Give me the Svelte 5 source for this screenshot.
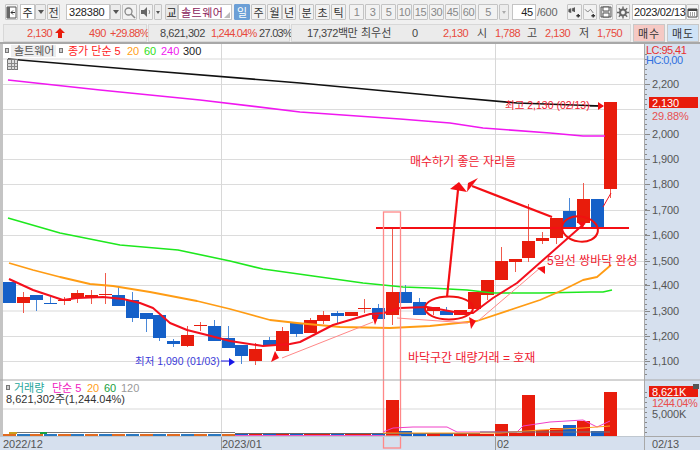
<script lang="ts">
  const RED = '#e81c0c';
  const BLUE = '#1560c8';

  const periods = ['1', '3', '5', '10', '15', '30', '45', '60'];

  // top, bottom, wick top, wick bottom, colour (r|b)
  const candles: [number, number, number, number, string][] = [
    [282, 303, 282, 303, 'b'], [297, 303, 292, 313, 'r'], [295, 300, 295, 311, 'b'], [303, 304, 297, 304, 'b'],
    [300, 301, 297, 305, 'r'], [293, 298, 290, 303, 'r'], [295, 298, 290, 304, 'r'], [294, 295, 273, 304, 'r'],
    [295, 306, 287, 306, 'b'], [300, 318, 292, 322, 'b'], [313, 319, 313, 332, 'b'], [315, 338, 315, 341, 'b'],
    [341, 344, 339, 347, 'b'], [335, 346, 326, 347, 'r'], [325, 326, 322, 331, 'r'], [326, 341, 320, 341, 'b'],
    [338, 348, 326, 348, 'b'], [345, 356, 345, 364, 'b'], [349, 361, 343, 365, 'r'], [340, 346, 337, 346, 'b'],
    [331, 351, 327, 351, 'r'], [323, 334, 323, 337, 'b'], [320, 333, 318, 333, 'r'], [315, 321, 311, 324, 'r'],
    [313, 316, 311, 323, 'b'], [312, 316, 312, 316, 'r'], [308, 309, 299, 313, 'r'], [308, 319, 304, 319, 'b'],
    [292, 315, 228, 325, 'r'], [292, 303, 285, 303, 'b'], [302, 315, 298, 315, 'b'], [307, 311, 307, 315, 'r'],
    [311, 315, 307, 315, 'b'], [310, 315, 310, 315, 'r'], [292, 309, 292, 309, 'r'], [280, 295, 280, 300, 'r'],
    [261, 280, 247, 280, 'r'], [259, 262, 259, 272, 'r'], [241, 258, 204, 262, 'r'], [238, 241, 232, 244, 'r'],
    [218, 238, 218, 244, 'r'], [211, 227, 198, 227, 'b'], [199, 223, 183, 223, 'r'], [199, 227, 199, 227, 'b'],
    [102, 189, 102, 198, 'r'],
  ];
  const cx = (i: number) => Math.round(3 + 13.67 * i);

  // volume tops by candle index, everything else sits near the baseline
  const volTops: Record<number, number> = {
    28: 400, 29: 431, 30: 433, 31: 433, 36: 424, 37: 433, 38: 395, 39: 430, 40: 428, 41: 425, 42: 421, 43: 431, 44: 392,
  };
  const volColor = ['#e06a20', '#2a78c0'];

  const priceGrid = [59, 84, 109, 134, 159, 184, 210, 235, 261, 285, 311, 336, 361];
  const axisLabels = [
    ['2,200', 84], ['2,000', 134], ['1,900', 159], ['1,800', 184], ['1,700', 210], ['1,600', 235],
    ['1,500', 261], ['1,400', 285], ['1,300', 311], ['1,200', 336], ['1,100', 361],
  ];
  const minorTicks = Array.from({ length: 66 }, (_, i) => 54 + i * 5).filter((y) => y < 378);
  const volTicks = [392, 397, 402, 407, 412, 417, 422, 427, 432];

  const ma300 = '8,59 140,70 300,83 450,97 517,103 602,106';
  const ma240 = '8,80 100,90 200,100 300,112 400,119 450,123 483,128 550,133 583,136 605,136';
  const ma60 = '8,218 60,233 120,245 178,250 230,261 263,269 313,276 363,283 403,287 430,288 467,290 493,293 540,293 590,292 603,292 612,290';
  const ma20 = '9,263 33,270 60,277 90,284 113,286 150,292 197,301 230,309 270,320 297,323 340,327 390,328 430,326 477,321 540,300 563,290 583,280 597,277 611,265';
  const ma5 = '9,279 33,290 63,300 77,298 103,297 123,299 140,303 153,308 170,323 187,330 207,335 230,341 263,346 290,344 300,342 333,325 370,314 384,313 400,308 427,307 460,313 473,313 493,298 517,283 585,223';
  const volMa5 = '383,432 393,428 413,427 447,427 457,432 517,432 523,426 550,422 583,420 597,427 610,421';
  const volMa20 = '383,433 500,433 540,430 583,428 610,426';
</script>

<div class="app">
  <div class="toolbar">
    <button class="btn w13">
      <svg width="11" height="13" viewBox="0 0 11 13"><path d="M1 1h9v11H1z" fill="#fff" stroke="#555" /><path d="M1 1h3v11H1z" fill="#666" /><path d="M9 6.500H5M7 4.500 5 6.500l2 2" fill="none" stroke="#333" /></svg>
    </button>
    <span class="input w15 ml2 center">주</span>
    <button class="btn w11 drop"><i class="tri"></i></button>
    <button class="btn w13 ml1">전</button>
    <span class="input w44 ml6">328380</span>
    <button class="btn w11 drop"><i class="tri"></i></button>
    <button class="btn w15 ml1">
      <svg width="13" height="13" viewBox="0 0 13 13"><circle cx="5.500" cy="5.500" r="3.500" fill="none" stroke="#888" stroke-width="1.300" /><path d="M8 8l4 4" stroke="#888" stroke-width="1.600" /></svg>
    </button>
    <button class="btn w14 ml2">
      <svg width="12" height="12" viewBox="0 0 12 12"><path d="M1 4h3l3-3v10L4 8H1z" fill="#666" /><path d="M9 4q1.500 2 0 4" fill="none" stroke="#888" /></svg>
    </button>
    <button class="btn w8 drop ml1"><i class="tri small"></i></button>
    <button class="btn w13 ml3 dark">교</button>
    <span class="input name">솔트웨어<i class="corner"></i></span>
    <button class="btn w16 active ml2">일</button>
    <button class="btn w15 ml1">주</button>
    <button class="btn w15 ml1">월</button>
    <button class="btn w14">년</button>
    <button class="btn w15 ml3">분</button>
    <button class="btn w15 ml1">초</button>
    <button class="btn w15 ml1">틱</button>
    <div class="periods">
      {#each periods as p}
        <button class="btn w15 muted">{p}</button>
      {/each}
    </div>
    <button class="btn w20 muted ml2">5</button>
    <button class="btn w10 drop ml1"><i class="tri small light"></i></button>
    <span class="input w24 ml3 right">45</span>
    <span class="count">/600</span>
    <button class="btn w15 ml9">
      <svg width="14" height="13" viewBox="0 0 14 13"><path d="M3 2v5M3 3h-2v3h2M7 1v5M7 2H5v3h2" fill="#555" stroke="#555" /><path d="M11 8v4M9 10h4" stroke="#333" stroke-width="1.500" /></svg>
    </button>
    <button class="btn w14 ml1">
      <svg width="13" height="13" viewBox="0 0 13 13"><path d="M1 3l3 3 3-3 3 4" fill="none" stroke="#777" /><path d="M10 8v4M8 10h4" stroke="#333" stroke-width="1.500" /></svg>
    </button>
    <button class="btn w14 ml2">
      <svg width="12" height="12" viewBox="0 0 12 12"><path d="M1 1h10v10H1z" fill="#ddd" stroke="#555" /><path d="M3 1h6v4H3zM3 7h6v4H3z" fill="#fff" stroke="#555" /></svg>
    </button>
    <button class="btn w14 ml3">
      <svg width="13" height="13" viewBox="0 0 13 13"><circle cx="6.500" cy="6.500" r="3.200" fill="none" stroke="#666" stroke-width="2.200" /><path d="M6.500 0v3M6.500 10v3M0 6.500h3M10 6.500h3M2 2l2 2M9 9l2 2M11 2L9 4M4 9l-2 2" stroke="#666" stroke-width="1.500" /></svg>
    </button>
    <span class="input date ml2">2023/02/13</span>
    <button class="btn w13">
      <svg width="11" height="11" viewBox="0 0 11 11"><path d="M1 2h9v8H1z" fill="#fff" stroke="#444" /><path d="M1 2h9v2H1z" fill="#444" /><path d="M3 6h1M5 6h1M7 6h1M3 8h1M5 8h1M7 8h1" stroke="#444" /></svg>
    </button>
  </div>

  <div class="quote">
    <div class="seg s1">
      <span class="red p2130">2,130</span>
      <svg class="up" width="10" height="10" viewBox="0 0 10 10"><path d="M5 0l5 5H7v5H3V5H0z" fill="#e81c0c" /></svg>
      <span class="red p490">490</span>
      <span class="red p2988">+29.88%</span>
    </div>
    <div class="seg s2">
      <span class="pvol">8,621,302</span>
      <span class="red prate">1,244.04%</span>
      <span class="pturn">27.03%</span>
    </div>
    <div class="seg s3">
      <span class="pamt">17,372백만</span>
      <span class="pbest">최우선</span>
      <span class="pzero">0</span>
      <span class="red pbid">2,130</span>
      <span class="k1">시</span>
      <span class="red v1">1,788</span>
      <span class="k2">고</span>
      <span class="red v2">2,130</span>
      <span class="k3">저</span>
      <span class="red v3">1,750</span>
    </div>
    <button class="order buy">매수</button>
    <button class="order sell">매도</button>
  </div>

  <svg class="chart" width="700" height="406" viewBox="0 44 700 406">
    <rect x="0" y="44" width="700" height="406" fill="#fff" />

    <!-- grid -->
    <g shape-rendering="crispEdges">
      {#each priceGrid as y}
        <line x1="3" x2="644" y1={y} y2={y} stroke={y === 59 || y === 311 ? '#ececec' : '#dcdcdc'} stroke-width={y === 59 || y === 311 ? 2 : 1} />
      {/each}
      <line x1="3" x2="644" y1="409" y2="409" stroke="#ececec" stroke-width="2" />
      <line x1="221.500" x2="221.500" y1="44" y2="436" stroke="#d8d8d8" />
      <line x1="495.500" x2="495.500" y1="44" y2="436" stroke="#d8d8d8" />
      <rect x="0" y="44" width="2.500" height="406" fill="#c4c4c4" />
    </g>

    <!-- candles -->
    <g shape-rendering="crispEdges">
      {#each candles as [top, bottom, wt, wb, c], i}
        <line x1={cx(i) + 6.5} x2={cx(i) + 6.5} y1={wt} y2={wb} stroke={c === 'r' ? '#f05a4c' : '#4a88d8'} />
        <rect x={cx(i)} y={top} width="12.500" height={bottom - top} fill={c === 'r' ? RED : BLUE} />
      {/each}
    </g>

    <!-- moving averages -->
    <g fill="none" stroke-linejoin="round">
      <polyline points={ma300} stroke="#111" stroke-width="1.700" />
      <polyline points={ma240} stroke="#f018f0" stroke-width="1.700" />
      <polyline points={ma60} stroke="#1ee81e" stroke-width="1.600" />
      <polyline points={ma20} stroke="#ff9c14" stroke-width="1.800" />
      <polyline points={ma5} stroke="#f40f1c" stroke-width="2" />
      <polyline points="603,207 611,193" stroke="#f40f1c" />
    </g>

    <!-- annotations -->
    <g>
      <line x1="376" x2="629" y1="228" y2="228" stroke="#f40f14" stroke-width="2.200" />
      <rect x="383.500" y="212" width="17" height="236" fill="none" stroke="#f88" stroke-width="1.300" />
      <ellipse cx="449" cy="308" rx="24" ry="11.500" fill="none" stroke="#f01010" stroke-width="2" />
      <ellipse cx="580" cy="229" rx="18" ry="12.500" fill="none" stroke="#f01010" stroke-width="2" transform="rotate(8 580 229)" />
      <line x1="447" y1="297" x2="458" y2="190" stroke="#f40f14" stroke-width="2.200" />
      <polygon points="459,182 450,189 467,192" fill="#f40f14" />
      <line x1="552" y1="217" x2="472" y2="186" stroke="#f40f14" stroke-width="2.200" />
      <polygon points="468,183 467,192 478,178" fill="#f40f14" />
      <polygon points="585,222 577,222 583,228" fill="#f40f14" />
      <line x1="282" y1="358" x2="373" y2="322" stroke="#f88" />
      <polygon points="271,362 279,358 275,351" fill="#f40f14" />
      <polygon points="372,315 379,315 375,325" fill="#f40f14" />
      <line x1="397" y1="318" x2="468" y2="323" stroke="#f88" />
      <polygon points="469,317 476,321 471,329" fill="#f40f14" />
      <line x1="478" y1="321" x2="540" y2="268" stroke="#f88" />
      <polygon points="537,268 545,266 545,274" fill="#f40f14" />
      <line x1="590" y1="106" x2="603" y2="106" stroke="#111" />
      <polygon points="604,106 598,102 598,110" fill="#f40f14" />
      <line x1="221" y1="361" x2="229" y2="361" stroke="#1818e8" />
      <polygon points="235,362 229,358 229,366" fill="#1818e8" />
    </g>

    <text class="ann big" x="410" y="166">매수하기 좋은 자리들</text>
    <text class="ann big" x="547" y="265">5일선 쌍바닥 완성</text>
    <text class="ann big" x="408" y="362">바닥구간 대량거래 = 호재</text>
    <text class="ann" x="505" y="109">최고 2,130 (02/13)</text>
    <text class="ann low" x="135" y="365">최저 1,090 (01/03)</text>

    <!-- price legend -->
    <rect x="5.500" y="48.500" width="3" height="4" fill="#ccc" stroke="#777" />
    <rect x="11" y="45" width="45" height="12" fill="#eee" />
    <text class="lg" x="14" y="55" fill="#555">솔트웨어</text>
    <rect x="59.500" y="48.500" width="3" height="4" fill="#ccc" stroke="#777" />
    <text class="lg" x="68" y="55" fill="#f22">종가 단순 5</text>
    <text class="lg" x="127" y="55" fill="#ffa020">20</text>
    <text class="lg" x="144" y="55" fill="#30e020">60</text>
    <text class="lg" x="161" y="55" fill="#f020f0">240</text>
    <text class="lg" x="183" y="55" fill="#222">300</text>
    <g shape-rendering="crispEdges">
      <rect x="7.500" y="59.500" width="10" height="10" fill="#ddd" stroke="#777" />
      <path d="M7 63h10M7 66h10M11 60v10M14 60v10" stroke="#888" />
    </g>

    <!-- volume pane -->
    <line x1="0" x2="700" y1="380" y2="380" stroke="#a8a8a8" />
    <rect x="6.500" y="385.500" width="3" height="4" fill="#ccc" stroke="#777" />
    <text class="lg" x="14" y="392" fill="#26a69a">거래량</text>
    <text class="lg" x="52" y="392" fill="#f020c0">단순 5</text>
    <text class="lg" x="87" y="392" fill="#ffa020">20</text>
    <text class="lg" x="104" y="392" fill="#18a040">60</text>
    <text class="lg" x="121" y="392" fill="#999">120</text>
    <text class="lg" x="6" y="403" fill="#333">8,621,302주(1,244.04%)</text>

    <g shape-rendering="crispEdges">
      {#each candles as [, , , , c], i}
        {#if volTops[i]}
          <rect x={cx(i)} y={volTops[i]} width="12.500" height={436 - volTops[i]} fill={c === 'r' ? RED : BLUE} />
        {:else}
          <rect x={cx(i)} y="434" width="12.500" height="2" fill={i > 16 ? (c === 'r' ? RED : BLUE) : volColor[i % 2]} />
        {/if}
      {/each}
      <line x1="9" x2="235" y1="432.500" y2="432.500" stroke="#777" />
      <line x1="235" x2="480" y1="433.500" y2="433.500" stroke="#666" />
      <line x1="235" x2="383" y1="435.500" y2="435.500" stroke="#e858c8" />
      <rect x="9" y="432" width="8" height="2" fill="#c8a020" />
      <rect x="40" y="432" width="7" height="2" fill="#18a040" />
    </g>
    <g fill="none">
      <polyline points={volMa5} stroke="#f040c8" />
      <polyline points={volMa20} stroke="#ffa020" />
      <line x1="480" x2="610" y1="432" y2="432" stroke="#777" />
    </g>

    <!-- pink box goes over the pane bottom too -->
    <rect x="0" y="436" width="700" height="14" fill="#d6e0ee" />
    <rect x="383.500" y="436" width="17" height="12" fill="none" stroke="#f88" stroke-width="1.300" />
    <line x1="221.500" x2="221.500" y1="436" y2="450" stroke="#999" />
    <line x1="495.500" x2="495.500" y1="436" y2="450" stroke="#999" />
    <line x1="0" x2="644" y1="436.500" y2="436.500" stroke="#c0c8d0" />
    <text class="tick" x="3" y="448">2022/12</text>
    <text class="tick" x="222" y="448">2023/01</text>
    <text class="tick" x="497" y="448">02</text>

    <!-- right axis -->
    <rect x="645" y="44" width="55" height="406" fill="#d6e0ee" />
    <line x1="644.500" x2="644.500" y1="44" y2="450" stroke="#a8a8a8" />
    <line x1="645" x2="700" y1="380" y2="380" stroke="#a8a8a8" />
    <line x1="645" x2="700" y1="436.500" y2="436.500" stroke="#a8a8a8" />
    <g shape-rendering="crispEdges" stroke="#888">
      {#each minorTicks as y}
        <line x1="645" x2="647" y1={y} y2={y} />
      {/each}
      {#each volTicks as y}
        <line x1="645" x2="647" y1={y} y2={y} />
      {/each}
      {#each axisLabels as [, y]}
        <line x1="645" x2="650" y1={y} y2={y} />
      {/each}
    </g>
    <text class="axis tight" x="646" y="54" fill="#e83030">LC:95,41</text>
    <text class="axis tight" x="646" y="64" fill="#3070e0">HC:0,00</text>
    {#each axisLabels as [label, y]}
      <text class="axis" x="652" y={+y + 4} fill="#555">{label}</text>
    {/each}
    <text class="axis" x="652" y="120" fill="#e85050">29.88%</text>
    <rect x="649" y="97" width="49" height="11" fill={RED} />
    <text class="axis" x="652" y="106.500" fill="#fff">2,130</text>
    <text class="axis" x="652" y="418" fill="#555">5,000K</text>
    <rect x="649" y="386" width="49" height="11" fill={RED} />
    <text class="axis" x="652" y="395.500" fill="#fff">8,621K</text>
    <text class="axis tight" x="652" y="407" fill="#e85050">1244.04%</text>
    <rect x="693" y="384" width="6" height="5" fill="#555" />
    <text class="axis" x="652" y="448" fill="#555">02/13</text>
  </svg>
</div>

<style>
  :global(body) {
    margin: 0;
    background: #f0f0f0;
  }

  .app {
    width: 700px;
    height: 450px;
    overflow: hidden;
    display: flex;
    flex-direction: column;
    font-family: 'Liberation Sans', 'Noto Sans CJK KR', sans-serif;
    font-size: 11px;
    color: #333;
    background: #f0f0f0;
  }

  .toolbar {
    height: 16px;
    padding: 4px 0 4px 5px;
    display: flex;
    align-items: stretch;
  }

  .btn {
    box-sizing: border-box;
    padding: 0;
    display: flex;
    align-items: center;
    justify-content: center;
    flex-shrink: 0;
    font: inherit;
    font-size: 11px;
    color: #333;
    background: #f2f2f2;
    border: 1px solid #c4c4c4;
    border-radius: 1px;
  }
  .btn.muted { color: #888; letter-spacing: -0.4px; }
  .btn.dark { color: #222; background: #e8e8e8; }
  .btn.active { color: #fff; background: #6c9fd6; border-color: #6c9fd6; }
  .btn.drop { background: #ececec; }

  .w8 { width: 8px; }
  .w10 { width: 10px; }
  .w11 { width: 11px; }
  .w13 { width: 13px; }
  .w14 { width: 14px; }
  .w15 { width: 15px; }
  .w16 { width: 16px; }
  .w20 { width: 20px; }
  .w24 { width: 24px; }
  .w44 { width: 44px; }
  .ml1 { margin-left: 1px; }
  .ml2 { margin-left: 2px; }
  .ml3 { margin-left: 3px; }
  .ml6 { margin-left: 6px; }
  .ml9 { margin-left: 9px; }

  .input {
    box-sizing: border-box;
    display: flex;
    align-items: center;
    padding: 0 2px;
    flex-shrink: 0;
    font-size: 11px;
    letter-spacing: -0.2px;
    color: #222;
    background: #fff;
    border: 1px solid #c4c4c4;
    white-space: nowrap;
  }
  .input.center { justify-content: center; }
  .input.right { justify-content: flex-end; }
  .input.name {
    position: relative;
    width: 54px;
    color: #8a1a5a;
    font-size: 11px;
    letter-spacing: 0.5px;
  }
  .input.date { width: 54px; letter-spacing: -0.35px; padding: 0 1px; }

  .tri {
    width: 0;
    height: 0;
    border-left: 3.500px solid transparent;
    border-right: 3.500px solid transparent;
    border-top: 4px solid #555;
  }
  .tri.small { border-left-width: 2.500px; border-right-width: 2.500px; border-top-width: 3px; }
  .tri.light { border-top-color: #aaa; }

  .corner {
    position: absolute;
    right: 1px;
    bottom: 1px;
    width: 0;
    height: 0;
    border-left: 6px solid transparent;
    border-bottom: 6px solid #bbb;
  }

  .periods {
    margin-left: 3px;
    display: flex;
    gap: 1px;
  }

  .count {
    box-sizing: border-box;
    width: 22px;
    padding-left: 1px;
    display: flex;
    align-items: center;
    font-size: 11px;
    letter-spacing: -0.3px;
    color: #666;
  }

  .quote {
    height: 18px;
    padding: 0 1px 0 3px;
    display: flex;
    gap: 1px;
    border-bottom: 2px solid #a8a8a8;
  }

  .seg {
    position: relative;
    background: #ebebeb;
    border: 1px solid #d8d8d8;
    box-sizing: border-box;
    line-height: 16px;
    font-size: 11px;
    letter-spacing: -0.45px;
    color: #444;
    white-space: nowrap;
  }
  .s1 { width: 144px; }
  .s2 { width: 142px; }
  .s3 { width: 340px; margin-right: 1px; }

  .seg span {
    position: absolute;
    top: 0;
  }
  .red { color: #e84a3c; }
  .up { position: absolute; left: 51px; top: 3px; }

  .p2130 { left: 23px; }
  .p490 { left: 85px; }
  .p2988 { left: 106px; letter-spacing: -0.7px; }
  .pvol { left: 11px; }
  .prate { left: 62px; letter-spacing: -0.8px; }
  .pturn { left: 110px; letter-spacing: -0.7px; }
  .pamt { left: 15px; }
  .pbest { left: 69px; letter-spacing: 0; }
  .pzero { left: 120px; }
  .pbid { left: 151px; }
  .k1 { left: 185px; }
  .v1 { left: 203px; }
  .k2 { left: 235px; }
  .v2 { left: 253px; }
  .k3 { left: 287px; }
  .v3 { left: 305px; }

  .order {
    box-sizing: border-box;
    width: 32px;
    padding: 0;
    font: inherit;
    font-size: 11px;
    letter-spacing: 1px;
    color: #333;
    border: 1px solid #c8c8c8;
  }
  .buy { background: #f5c9c4; }
  .sell { background: #cfe3f6; margin-left: 1px; }

  .chart {
    display: block;
    flex-shrink: 0;
  }
  .chart text {
    font-family: 'Liberation Sans', 'Noto Sans CJK KR', sans-serif;
  }
  .ann {
    font-size: 10.500px;
    fill: #f02030;
  }
  .ann.big { font-size: 12px; }
  .ann.low { fill: #3a3ad8; }
  .lg { font-size: 11px; }
  .tick { font-size: 11px; fill: #555; }
  .axis { font-size: 11px; letter-spacing: -0.1px; }
  .axis.tight { letter-spacing: -0.55px; }
</style>
